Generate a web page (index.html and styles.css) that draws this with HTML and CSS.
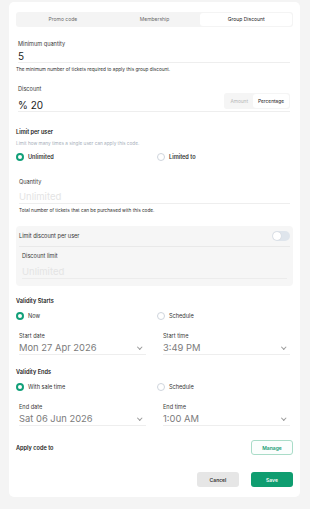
FILE: index.html
```html
<!DOCTYPE html>
<html lang="en">
<head>
    <meta charset="UTF-8">
    <meta name="viewport" content="width=device-width, initial-scale=1.0">
    <title>Group Discount</title>
    <link rel="stylesheet" href="styles.css">
</head>
<body>

<div class="card">

    <!-- Tabs -->
    <div class="tabs">
        <div class="tab">Promo code</div>
        <div class="tab">Membership</div>
        <div class="tab active">Group Discount</div>
    </div>

    <!-- Minimum quantity -->
    <div class="field min-qty">
        <div class="label">Minimum quantity</div>
        <div class="value big">5</div>
    </div>
    <div class="hint hint-dark">The minimum number of tickets required to apply this group discount.</div>

    <!-- Discount -->
    <div class="field discount">
        <div class="label">Discount</div>
        <div class="discount-row">
            <div class="value big">% 20</div>
            <div class="switcher">
                <span class="opt">Amount</span>
                <span class="opt on">Percentage</span>
            </div>
        </div>
    </div>

    <!-- Limit per user -->
    <div class="section-title limit-title">Limit per user</div>
    <div class="hint hint-soft">Limit how many times a single user can apply this code.</div>
    <div class="radios">
        <label class="radio bold"><span class="dot checked"></span>Unlimited</label>
        <label class="radio bold"><span class="dot"></span>Limited to</label>
    </div>

    <div class="field qty">
        <div class="label">Quantity</div>
        <div class="value placeholder">Unlimited</div>
    </div>
    <div class="hint hint-dark qty-hint">Total number of tickets that can be purchased with this code.</div>

    <!-- Grey box -->
    <div class="greybox">
        <div class="box-head">
            <span>Limit discount per user</span>
            <span class="switch"><span class="knob"></span></span>
        </div>
        <div class="field inbox">
            <div class="label">Discount limit</div>
            <div class="value placeholder">Unlimited</div>
        </div>
    </div>

    <!-- Validity starts -->
    <div class="section-title validity">Validity Starts</div>
    <div class="radios">
        <label class="radio"><span class="dot checked"></span>Now</label>
        <label class="radio"><span class="dot"></span>Schedule</label>
    </div>
    <div class="dates">
        <div class="field">
            <div class="label">Start date</div>
            <div class="value select">Mon 27 Apr 2026<span class="chev"></span></div>
        </div>
        <div class="field">
            <div class="label">Start time</div>
            <div class="value select">3:49 PM<span class="chev"></span></div>
        </div>
    </div>

    <!-- Validity ends -->
    <div class="section-title validity-end">Validity Ends</div>
    <div class="radios">
        <label class="radio"><span class="dot checked"></span>With sale time</label>
        <label class="radio"><span class="dot"></span>Schedule</label>
    </div>
    <div class="dates">
        <div class="field">
            <div class="label">End date</div>
            <div class="value select">Sat 06 Jun 2026<span class="chev"></span></div>
        </div>
        <div class="field">
            <div class="label">End time</div>
            <div class="value select">1:00 AM<span class="chev"></span></div>
        </div>
    </div>

    <!-- Apply code -->
    <div class="apply-row">
        <span class="section-title">Apply code to</span>
        <button class="btn btn-outline">Manage</button>
    </div>

    <div class="footer">
        <button class="btn btn-grey">Cancel</button>
        <button class="btn btn-green">Save</button>
    </div>
</div>

</body>
</html>
```

FILE: styles.css
```css
body {
    margin: 0;
    background: #f4f4f4;
    font-family: 'Inter', 'Noto Sans', sans-serif;
    color: #2b2b2b;
}

/* card */
.card {
    width: 277px;
    margin: 2px 10px 12px 9px;
    padding: 10px 7px 10px 7px;
    background: #ffffff;
    border-radius: 5px;
}

/* tabs */
.tabs {
    display: grid;
    grid-template-columns: 1fr 1fr 1fr;
    height: 15px;
    padding: 1px;
    box-sizing: border-box;
    background: #f4f4f4;
    border-radius: 3px;
}

.tab {
    font-size: 5px;
    line-height: 13px;
    text-align: center;
    color: #6b6b6b;
}

.tab.active {
    background: #fff;
    color: #222;
    border-radius: 3px;
}

/* fields */
.field {
    padding: 0 3px 0 2px;
}

.label {
    font-size: 5.6px;
    line-height: 8px;
    color: #3a3a3a;
}

.value {
    border-bottom: 1px solid #eeeeee;
}

.big {
    font-size: 10px;
    line-height: 12px;
    color: #222;
}

.min-qty {
    margin-top: 13px;
}

.min-qty .value {
    margin-top: 2px;
}

.hint {
    font-size: 4.7px;
    line-height: 6px;
}

.hint-dark {
    color: #2e2e2e;
    margin-top: 3px;
}

.hint-soft {
    color: #a7afba;
    margin-top: 4px;
}

.discount {
    margin-top: 13px;
}

.discount-row {
    display: flex;
    justify-content: space-between;
    align-items: flex-end;
    border-bottom: 1px solid #eeeeee;
}

.discount-row .value {
    border-bottom: none;
}

.switcher {
    display: flex;
    height: 16px;
    padding: 1px;
    box-sizing: border-box;
    margin: 0 0 2px;
    background: #f5f5f5;
    border-radius: 3px;
}

.opt {
    font-size: 4.8px;
    line-height: 14px;
    padding: 0 5px;
    color: #b5b5b5;
}

.opt.on {
    background: #fff;
    color: #222;
    border-radius: 3px;
}

.section-title {
    font-size: 5.6px;
    line-height: 8px;
    font-weight: 600;
    color: #222;
}

.limit-title {
    margin-top: 16px;
}

/* radios */
.radios {
    display: grid;
    grid-template-columns: 141px 1fr;
    margin-top: 6px;
    height: 10px;
}

.radio {
    display: flex;
    align-items: center;
    gap: 4px;
    font-size: 5.6px;
    color: #333;
}

.radio.bold {
    font-weight: 600;
}

.dot {
    width: 8px;
    height: 8px;
    box-sizing: border-box;
    border: 1px solid #cfd5dd;
    border-radius: 50%;
}

.dot.checked {
    border: 2px solid #12a079;
}

.qty {
    margin-top: 16px;
    padding-left: 3px;
}

.placeholder {
    margin-top: 5px;
    font-size: 9.5px;
    line-height: 12px;
    color: #e4e4e4;
}

.qty-hint {
    padding-left: 3px;
}

/* grey box */
.greybox {
    margin-top: 13px;
    background: #f6f6f6;
    border-radius: 4px;
    padding-bottom: 7px;
}

.box-head {
    display: flex;
    justify-content: space-between;
    align-items: center;
    height: 20px;
    margin: 0 3px;
    font-size: 5.6px;
    color: #333;
    border-bottom: 1px solid #e9e9e9;
}

.switch {
    width: 18px;
    height: 10px;
    border-radius: 5px;
    background: #dfe5ec;
    display: flex;
    align-items: center;
    padding: 1px;
    box-sizing: border-box;
}

.knob {
    width: 8px;
    height: 8px;
    border-radius: 50%;
    background: #fff;
    box-shadow: 0 0 1px rgba(0, 0, 0, 0.2);
}

.inbox {
    padding: 5px 6px 0;
}

.inbox .placeholder {
    margin-top: 6px;
    border-bottom-color: #ececec;
}

/* validity */
.validity {
    margin-top: 11px;
}

.validity-end {
    margin-top: 13px;
}

.dates {
    display: grid;
    grid-template-columns: 1fr 1fr;
    gap: 17px;
    margin-top: 11px;
    padding: 0 3px;
}

.dates .field {
    padding: 0;
}

.select {
    display: flex;
    justify-content: space-between;
    align-items: center;
    margin-top: 1px;
    font-size: 9.4px;
    line-height: 13px;
    color: #7b7b7b;
}

.chev {
    width: 2.5px;
    height: 2.5px;
    margin: 0 5px 2px 0;
    border-right: 0.7px solid #999;
    border-bottom: 0.7px solid #999;
    transform: rotate(45deg);
}

/* apply + footer */
.apply-row {
    display: flex;
    justify-content: space-between;
    align-items: center;
    margin-top: 14px;
}

.btn {
    width: 42px;
    height: 15px;
    border-radius: 3px;
    font-family: inherit;
    font-size: 5px;
    font-weight: 600;
    padding: 0;
    cursor: pointer;
}

.btn-outline {
    background: #fbfefd;
    color: #189b72;
    border: 1px solid #a9dcc8;
}

.footer {
    display: flex;
    justify-content: flex-end;
    gap: 12px;
    margin-top: 17px;
}

.btn-grey {
    background: #e6e6e6;
    border: none;
    color: #333;
}

.btn-green {
    background: #0f9d70;
    border: none;
    color: #fff;
}
```
